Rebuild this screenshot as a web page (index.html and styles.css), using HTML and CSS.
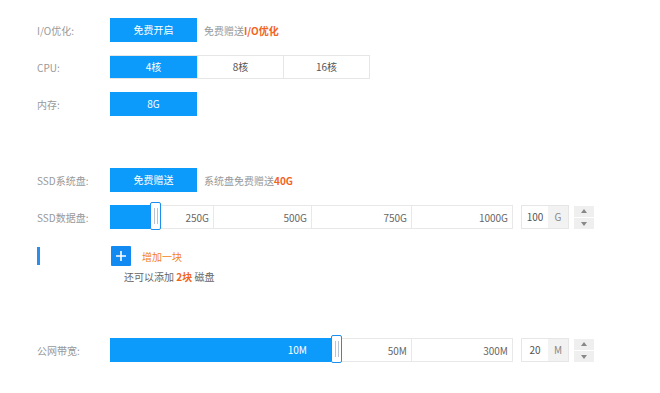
FILE: index.html
```html
<!DOCTYPE html>
<html lang="zh-CN">

<head>
    <meta charset="UTF-8">
    <meta name="viewport" content="width=device-width, initial-scale=1.0">
    <title>云服务器配置</title>
    <link rel="stylesheet" href="styles.css">
</head>

<body>
    <main class="config">
        <div class="row">
            <div class="label">I/O优化:</div>
            <div class="btn active">免费开启</div>
            <div class="tip">免费赠送<b>I/O优化</b></div>
        </div>
        <div class="row">
            <div class="label">CPU:</div>
            <div class="btn-group">
                <div class="btn active">4核</div>
                <div class="btn">8核</div>
                <div class="btn">16核</div>
            </div>
        </div>
        <div class="row">
            <div class="label">内存:</div>
            <div class="btn active">8G</div>
        </div>

        <div class="row row-gap">
            <div class="label">SSD系统盘:</div>
            <div class="btn active">免费赠送</div>
            <div class="tip">系统盘免费赠送<b>40G</b></div>
        </div>
        <div class="row">
            <div class="label">SSD数据盘:</div>
            <div class="slider">
                <div class="fill" style="width: 40px;"></div>
                <div class="cell c1">250G</div>
                <div class="cell c2">500G</div>
                <div class="cell c3">750G</div>
                <div class="cell c4">1000G</div>
                <div class="handle" style="left: 40px;"><span></span><span></span></div>
            </div>
            <div class="num-input">
                <div class="num">100</div>
                <div class="unit">G</div>
            </div>
            <div class="spinner">
                <div class="arrow up"></div>
                <div class="arrow down"></div>
            </div>
        </div>
        <div class="add-row">
            <div class="label"><i class="mark"></i></div>
            <div class="add-btn">
                <svg width="12" height="12" viewBox="0 0 12 12">
                    <path d="M6 1v10M1 6h10" stroke="#fff" stroke-width="1.6" />
                </svg>
            </div>
            <div class="add-text">增加一块</div>
        </div>
        <div class="remain">还可以添加 <b>2块</b> 磁盘</div>

        <div class="row row-band">
            <div class="label">公网带宽:</div>
            <div class="slider">
                <div class="fill" style="width: 221px;"></div>
                <div class="cell b1">10M</div>
                <div class="cell c3">50M</div>
                <div class="cell c4">300M</div>
                <div class="handle" style="left: 221px;"><span></span><span></span></div>
            </div>
            <div class="num-input">
                <div class="num">20</div>
                <div class="unit">M</div>
            </div>
            <div class="spinner">
                <div class="arrow up"></div>
                <div class="arrow down"></div>
            </div>
        </div>
    </main>
</body>

</html>
```

FILE: styles.css
```css
body {
    margin: 0;
    padding: 0;
    background: #fff;
    font-family: "Noto Sans CJK SC", "Noto Sans", sans-serif;
    font-size: 10px;
    color: #666;
}

.config {
    padding: 18px 0 0 37px;
}

.row {
    display: flex;
    align-items: center;
    height: 24px;
    margin-bottom: 13px;
}

.row-gap {
    margin-top: 52px;
}

.label {
    width: 73px;
    color: #999;
    flex-shrink: 0;
}

.btn {
    width: 87px;
    height: 24px;
    line-height: 24px;
    text-align: center;
    box-sizing: border-box;
    color: #555;
}

.btn.active {
    background-color: #0d9bfb;
    color: #fff;
}

.btn-group {
    display: flex;
    border: 1px solid #e6e6e6;
    border-left: none;
    height: 24px;
    box-sizing: border-box;
}

.btn-group .btn {
    height: 22px;
    line-height: 22px;
    width: 86px;
    border-left: 1px solid #e6e6e6;
}

.btn-group .btn.active {
    width: 87px;
    border-left: none;
}

.tip {
    margin-left: 7px;
    color: #999;
}

.tip b {
    color: #f2641d;
    font-weight: bold;
}

.slider {
    position: relative;
    display: flex;
    height: 24px;
    width: 403px;
}

.slider .fill {
    position: absolute;
    left: 0;
    top: 0;
    bottom: 0;
    background-color: #0d9bfb;
}

.cell {
    height: 24px;
    line-height: 24px;
    box-sizing: border-box;
    border: 1px solid #e8e8e8;
    border-left: none;
    text-align: right;
    padding-right: 4px;
    color: #666;
}

.c1 {
    width: 104px;
}

.c2 {
    width: 98px;
}

.c3 {
    width: 100px;
}

.c4 {
    width: 101px;
}

.b1 {
    width: 202px;
    position: relative;
    color: #fff;
    border: none;
    padding-right: 5px;
}

.handle {
    position: absolute;
    top: -3px;
    width: 11px;
    height: 28px;
    box-sizing: border-box;
    background: #fff;
    border: 1px solid #1a8ff0;
    border-radius: 2px;
    display: flex;
    justify-content: center;
    align-items: center;
    gap: 2px;
}

.handle span {
    width: 1px;
    height: 16px;
    background: #b9c4d0;
}

.num-input {
    display: flex;
    margin-left: 8px;
    height: 24px;
    border: 1px solid #e6e6e6;
    box-sizing: border-box;
}

.num {
    width: 26px;
    line-height: 22px;
    text-align: center;
    color: #555;
}

.unit {
    width: 20px;
    line-height: 22px;
    text-align: center;
    background: #f2f2f2;
    color: #888;
}

.spinner {
    margin-left: 5px;
    display: flex;
    flex-direction: column;
    gap: 1px;
}

.arrow {
    width: 20px;
    height: 11px;
    background: #efefef;
    position: relative;
}

.arrow::after {
    content: '';
    position: absolute;
    left: 7px;
    border-left: 3px solid transparent;
    border-right: 3px solid transparent;
}

.arrow.up::after {
    top: 3px;
    border-bottom: 4px solid #888;
}

.arrow.down::after {
    top: 4px;
    border-top: 4px solid #888;
}

.add-row {
    display: flex;
    align-items: center;
    height: 20px;
    margin-top: 17px;
}

.mark {
    display: block;
    width: 3px;
    height: 18px;
    background-color: #2d8ee8;
}

.add-btn {
    width: 20px;
    height: 20px;
    margin-left: 1px;
    background-color: #1389f2;
    border-radius: 1px;
    display: flex;
    align-items: center;
    justify-content: center;
}

.add-text {
    margin-left: 11px;
    color: #f2801d;
}

.remain {
    margin: 4px 0 0 87px;
    line-height: 14px;
    color: #666;
}

.remain b {
    color: #f2641d;
}

.row-band {
    margin-top: 54px;
}
```
